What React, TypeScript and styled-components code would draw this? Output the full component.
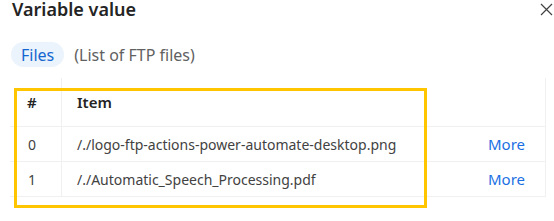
import styled, { createGlobalStyle } from 'styled-components';

const GlobalStyle = createGlobalStyle`
  html, body {
    margin: 0;
    padding: 0;
    background: #ffffff;
  }
  body {
    font-family: "Segoe UI", "Noto Sans", sans-serif;
    color: #242424;
    overflow: hidden;
  }
`;

const Panel = styled.div`
  position: relative;
  width: 554px;
  height: 221px;
  overflow: hidden;
  background: #ffffff;
`;

const Header = styled.div`
  display: flex;
  align-items: flex-start;
  justify-content: space-between;
  height: 18px;
  padding: 0 0 0 12px;
`;

const Title = styled.h2`
  margin: 0;
  font-size: 18px;
  font-weight: 600;
  line-height: 18px;
  color: #242424;
`;

const CloseButton = styled.button`
  display: flex;
  border: none;
  background: none;
  padding: 0;
  margin: 3px 1px 0 0;
  cursor: pointer;
`;

const TypeRow = styled.div`
  display: flex;
  align-items: center;
  gap: 10px;
  padding: 24px 0 0 11px;
`;

const TypePill = styled.span`
  display: inline-flex;
  align-items: center;
  height: 25px;
  padding: 0 10px;
  border-radius: 13px;
  background: #ebf3fc;
  color: #1467d0;
  font-size: 16px;
`;

const TypeHint = styled.span`
  color: #616161;
  font-size: 16px;
`;

const Table = styled.table`
  margin: 11px 0 0 10px;
  width: 536px;
  border-collapse: collapse;
  border-right: 1px solid #f0f0f0;
  font-size: 14px;
`;

const HeadCell = styled.th<{ $narrow?: boolean }>`
  height: 48px;
  padding: 0 0 0 ${p => (p.$narrow ? '17px' : '15px')};
  width: ${p => (p.$narrow ? '34px' : 'auto')};
  vertical-align: middle;
  text-align: left;
  font-weight: 600;
  font-size: 15px;
  color: #242424;
  border-bottom: 1px solid #f0f0f0;
  border-right: ${p => (p.$narrow ? '1px solid #f0f0f0' : 'none')};
`;

const Cell = styled.td<{ $narrow?: boolean; $action?: boolean }>`
  height: 34px;
  padding: 0 ${p => (p.$action ? '20px' : '0')} 0 ${p => (p.$narrow ? '18px' : p.$action ? '0' : '15px')};
  vertical-align: middle;
  text-align: ${p => (p.$action ? 'right' : 'left')};
  color: #424242;
  border-bottom: 1px solid #f0f0f0;
  border-right: ${p => (p.$narrow ? '1px solid #f0f0f0' : 'none')};
  white-space: nowrap;
`;

const MoreLink = styled.a`
  color: #1a6fe3;
  text-decoration: none;
  cursor: pointer;
  font-size: 15px;
`;

const Highlight = styled.div`
  position: absolute;
  left: 14px;
  top: 88px;
  width: 407px;
  height: 114px;
  border: 3px solid #ffc600;
  pointer-events: none;
`;

const rows = [
  '/./logo-ftp-actions-power-automate-desktop.png',
  '/./Automatic_Speech_Processing.pdf',
];

export default function App() {
  return (
    <>
      <GlobalStyle />
      <Panel>
        <Header>
          <Title>Variable value</Title>
          <CloseButton aria-label="Close">
            <svg width="13" height="13" viewBox="0 0 13 13">
              <path d="M1 1 L12 12 M12 1 L1 12" stroke="#424242" strokeWidth="1.2" fill="none" />
            </svg>
          </CloseButton>
        </Header>
        <TypeRow>
          <TypePill>Files</TypePill>
          <TypeHint>(List of FTP files)</TypeHint>
        </TypeRow>
        <Table>
          <thead>
            <tr>
              <HeadCell $narrow>#</HeadCell>
              <HeadCell>Item</HeadCell>
              <HeadCell />
            </tr>
          </thead>
          <tbody>
            {rows.map((item, i) => (
              <tr key={item}>
                <Cell $narrow>{i}</Cell>
                <Cell>{item}</Cell>
                <Cell $action>
                  <MoreLink>More</MoreLink>
                </Cell>
              </tr>
            ))}
          </tbody>
        </Table>
        <Highlight />
      </Panel>
    </>
  );
}
